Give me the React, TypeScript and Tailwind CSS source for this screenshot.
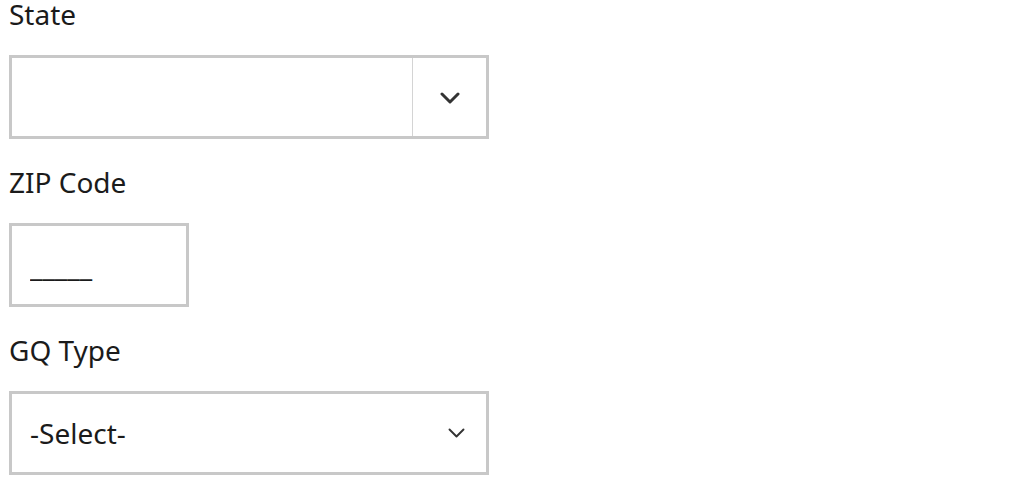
import { useState } from "react";

function Chevron({ thin }: { thin?: boolean }) {
    return thin ? (
        <svg width="17" height="11" viewBox="0 0 17 11" fill="none" className="text-[#333]">
            <path d="M1.5 1.5 L8.5 8.5 L15.5 1.5" stroke="currentColor" strokeWidth={1.9} strokeLinecap="round" strokeLinejoin="round" />
        </svg>
    ) : (
        <svg width="20" height="12" viewBox="0 0 20 12" fill="none" className="text-[#333]">
            <path d="M2 2 L10 10 L18 2" stroke="currentColor" strokeWidth={3} strokeLinecap="round" strokeLinejoin="round" />
        </svg>
    );
}

export default function App() {
    const [zip, setZip] = useState("_____");

    return (
        <div
            className="bg-white w-[1011px] h-[490px] pl-[9px] text-[#1b1b1b] text-[28px]"
            style={{ fontFamily: '"Noto Sans", "Open Sans", sans-serif' }}
        >
            {/* State */}
            <div className="h-[55px] leading-[28px]">State</div>
            <div className="w-[480px] h-[84px] border-[3px] border-[#c8c8c8] flex">
                <div className="flex-1" />
                <div className="w-[74px] border-l border-[#d4d4d4] flex items-center justify-center pt-[2px]">
                    <Chevron />
                </div>
            </div>

            {/* ZIP */}
            <div className="mt-[29px] h-[55px] leading-[28px]">ZIP Code</div>
            <div className="w-[180px] h-[84px] border-[3px] border-[#c8c8c8] flex items-center pl-[18px] pt-[2px]">
                <input
                    value={zip}
                    onChange={(e) => setZip(e.target.value)}
                    className="w-full outline-none bg-transparent text-[28px]"
                />
            </div>

            {/* GQ Type */}
            <div className="mt-[29px] h-[55px] leading-[28px]">GQ Type</div>
            <div className="w-[480px] h-[84px] border-[3px] border-[#c8c8c8] flex items-center pl-[18px] pr-[21px]">
                <span className="flex-1">-Select-</span>
                <Chevron thin />
            </div>
        </div>
    );
}
